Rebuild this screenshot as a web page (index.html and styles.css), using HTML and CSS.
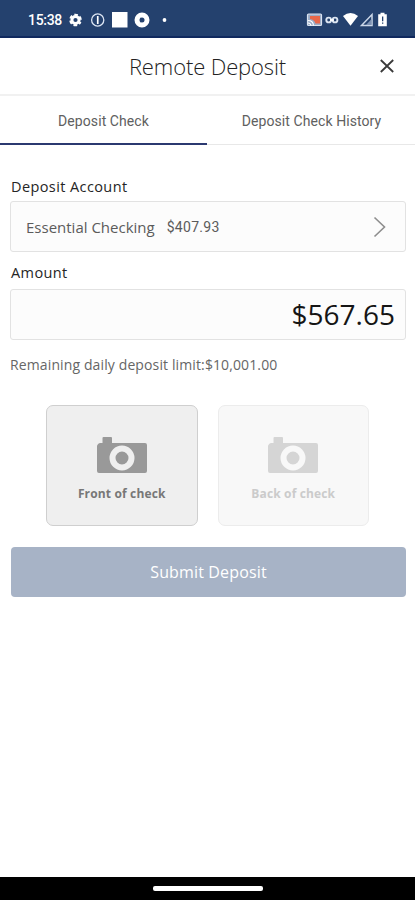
FILE: index.html
```html
<!DOCTYPE html>
<html lang="en">
<head>
<meta charset="utf-8">
<title>Remote Deposit</title>
<link rel="stylesheet" href="styles.css">
</head>
<body>
<div class="screen">
  <div class="status">
    <span class="time">15:38</span>
    <svg class="status-left" width="102" height="18" viewBox="68 11 102 18" fill="#fff">
      <circle cx="75.5" cy="20" r="3.6" fill="none" stroke="#fff" stroke-width="3"/>
      <circle cx="75.5" cy="20" r="5.3" fill="none" stroke="#fff" stroke-width="2" stroke-dasharray="3.4 2.150" stroke-dashoffset="1.700" transform="rotate(30 75.5 20)"/>
      <circle cx="97.7" cy="20" r="6.1" fill="none" stroke="#dce5f3" stroke-width="1.3"/>
      <path d="M96.9 16h1.7v8h-1.7z"/>
      <path d="M112 12h15.5v15.5H112z"/>
      <circle cx="142" cy="20" r="5" fill="none" stroke="#fff" stroke-width="5"/>
      <path d="M140.5 17.5l4 2.5-4 2.5z" fill="#24416e"/>
      <circle cx="164.5" cy="20" r="1.9"/>
    </svg>
    <svg class="status-right" width="84" height="18" viewBox="305 11 84 18" fill="#fff">
      <rect x="307.5" y="14" width="14" height="11.5" rx="1" fill="#9aabc6" stroke="#d9e2ef" stroke-width="1.2"/>
      <path d="M310 16h10v7.5h-4.5q-1-4-5.5-4.5z" fill="#e8674a"/>
      <path d="M308 20.5q5 0 5.5 5M308 23q2.5 0 3 2.5" fill="none" stroke="#fff" stroke-width="1.1"/>
      <circle cx="328.7" cy="20" r="2.4" fill="none" stroke="#dce5f2" stroke-width="1.900"/>
      <circle cx="335" cy="20" r="2.4" fill="none" stroke="#dce5f2" stroke-width="1.900"/>
      <path d="M330 19.200h4v1.600h-4z"/>
      <path d="M343 16q7.500-6 15 0l-7.500 9.800z"/>
      <path d="M361.500 25.500L372 14.500v11z" fill="none" stroke="#cbd7e8" stroke-width="1.500"/>
      <path d="M366 25l5.500-6v6z" fill="#7d92b4"/>
      <path d="M380.500 12.800h4v1.400h2.300v12h-8.600v-12h2.300z"/>
      <path d="M382 16.500h1.300v4.800H382zM382 22.500h1.300v1.300H382z" fill="#24416e"/>
    </svg>
  </div>

  <header class="header">
    <h1><span>Remote Deposit</span></h1>
    <svg class="close" width="16" height="16" viewBox="0 0 16 16"><path d="M1.800 2l12.400 12M14.200 2L1.800 14" fill="none" stroke="#3a3a3a" stroke-width="1.800"/></svg>
  </header>

  <nav class="tabs">
    <div class="tab active"><span>Deposit Check</span></div>
    <div class="tab"><span>Deposit Check History</span></div>
  </nav>

  <main class="form">
    <div class="label label-account">Deposit Account</div>
    <div class="field account">
      <span class="account-name">Essential Checking</span>
      <span class="balance">$407.93</span>
      <svg class="chevron" width="14" height="22" viewBox="0 0 14 22"><path d="M1.500 1.500L11.500 11l-10 9.500" fill="none" stroke="#8e8e8e" stroke-width="1.600"/></svg>
    </div>
    <div class="label label-amount">Amount</div>
    <div class="field amount"><span>$567.65</span></div>
    <div class="limit"><span>Remaining daily deposit limit:</span><span class="limit-value">$10,001.00</span></div>

    <div class="cards">
      <div class="card front">
        <svg width="50" height="37" viewBox="0 0 50 37" fill="#999"><path d="M6.500 0H14q1 0 1 1v5h33q2 0 2 2v26q0 2-2 2H2q-2 0-2-2V9.500Q0 7 3 6h2.500V1q0-1 1-1z"/><circle cx="25" cy="21" r="9.500" fill="#999" stroke="#efefef" stroke-width="6"/></svg>
        <span>Front of check</span>
      </div>
      <div class="card back">
        <svg width="50" height="37" viewBox="0 0 50 37" fill="#d5d5d5"><path d="M6.500 0H14q1 0 1 1v5h33q2 0 2 2v26q0 2-2 2H2q-2 0-2-2V9.500Q0 7 3 6h2.500V1q0-1 1-1z"/><circle cx="25" cy="21" r="9.500" fill="#d5d5d5" stroke="#f8f8f8" stroke-width="6"/></svg>
        <span>Back of check</span>
      </div>
    </div>

    <button class="submit"><span>Submit Deposit</span></button>
  </main>

  <div class="home-bar"><div class="pill"></div></div>
</div>
</body>
</html>
```
FILE: styles.css
```css
* { box-sizing: border-box; }
body { margin: 0; background: #fff; font-family: "Open Sans", sans-serif; }
.screen { width: 415px; height: 900px; display: flex; flex-direction: column; overflow: hidden; white-space: nowrap; }

.status { height: 38px; flex: none; display: flex; align-items: center; background: #24416e; border-bottom: 2px solid #10295e; padding: 3px 26px 0 28px; }
.time { width: 40px; color: #fff; font: 500 14px/18px Roboto, sans-serif; letter-spacing: -0.3px; }
.status-right { margin-left: auto; }

.header { height: 58px; flex: none; display: flex; align-items: center; justify-content: flex-end; padding-right: 20px; border-bottom: 2px solid #f1f1f1; }
.header h1 { flex: 1; margin: 0; padding-left: 36px; text-align: center; font-size: 22px; line-height: 30px; font-weight: 300; letter-spacing: -0.12px; color: #222; }

.tabs { height: 49px; flex: none; display: flex; }
.tab { flex: 1; display: flex; align-items: center; justify-content: center; padding-top: 1px; border-bottom: 1px solid #e8e8e8; font: 400 14px/18px Roboto, sans-serif; letter-spacing: 0.08px; color: #606060; }
.tab + .tab { padding-left: 1px; }
.tab.active { padding-top: 2px; border-bottom: 2px solid #2b3970; }

.form { flex: 1; display: flex; flex-direction: column; padding: 31px 9px 0 10px; }
.label { height: 22px; padding-left: 1px; font-size: 14.5px; line-height: 22px; color: #252525; font-weight: 500; letter-spacing: 0.4px; }
.field { height: 51px; display: flex; align-items: center; background: #fcfcfc; border: 1px solid #e2e2e2; border-radius: 3px; }
.label-account { margin-bottom: 3px; }
.account { padding: 0 18px 0 15px; font-size: 15px; color: #5b5b5b; }
.balance { margin-left: 12px; font-size: 14px; font-family: Roboto, sans-serif; letter-spacing: 0.3px; }
.chevron { margin-left: auto; }
.label-amount { margin: 10px 0 5px; }
.amount { justify-content: flex-end; padding: 0 10px 1px 0; font-size: 28px; color: #151515; }
.limit { height: 22px; margin-top: 14px; padding-left: 0; font-size: 14px; line-height: 22px; letter-spacing: 0.12px; color: #666; }
.cards { display: flex; gap: 20px; margin: 29px 0 21px 36px; }
.card { width: 151.5px; height: 121px; display: flex; flex-direction: column; align-items: center; padding-top: 31px; border: 1px solid #cfcfcf; border-radius: 7px; background: #efefef; color: #777; font-size: 12px; line-height: 18px; font-weight: 700; letter-spacing: 0.15px; }
.card span { margin-top: 11px; }
.back { border-color: #ececec; background: #f8f8f8; color: #cbcbcb; }
.submit { height: 50px; margin: 0 0 0 1px; border: 0; border-radius: 4px; background: #a7b3c6; color: #fff; font: 400 16px/22px "Open Sans", sans-serif; letter-spacing: 0.15px; }

.home-bar { height: 23px; flex: none; background: #000; display: flex; justify-content: center; padding-top: 9px; }
.pill { width: 110px; height: 5px; background: #fff; border-radius: 2px; }
```
